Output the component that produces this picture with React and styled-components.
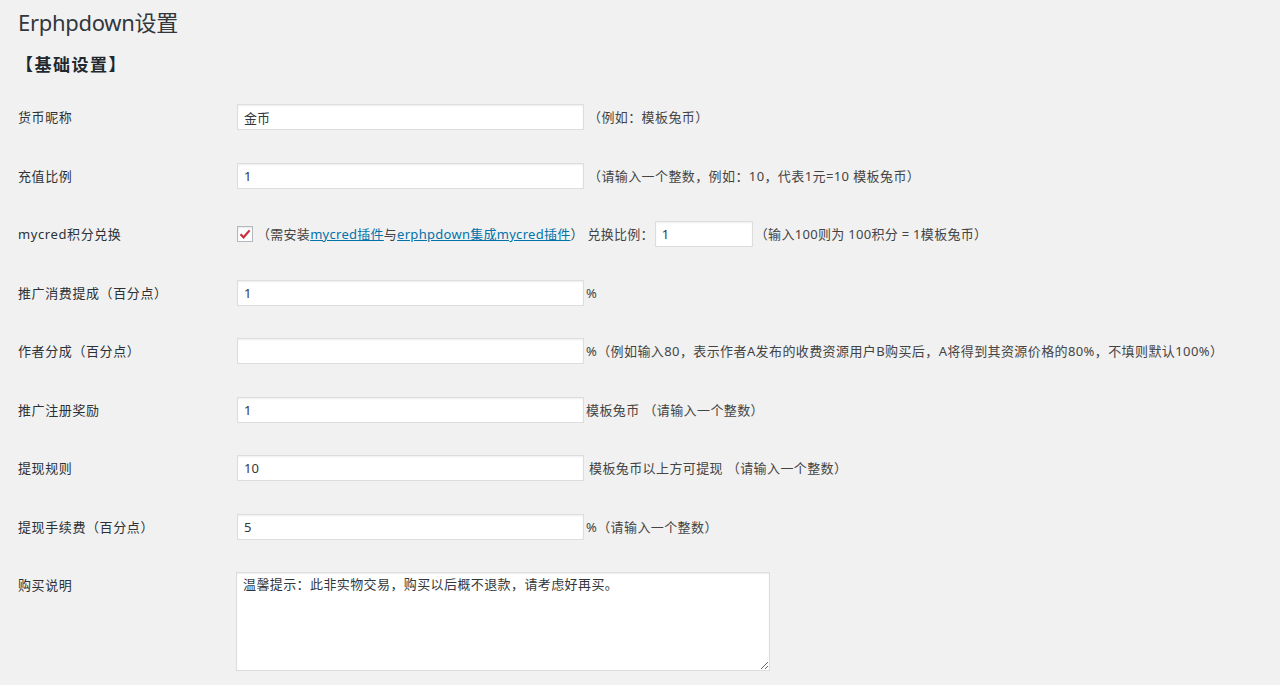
import React from "react";
import styled, { createGlobalStyle } from "styled-components";

const Global = createGlobalStyle`
  html, body { margin: 0; padding: 0; background: #f1f1f1; }
  body {
    font-family: "Noto Sans", "Noto Sans CJK SC", sans-serif;
    font-size: 13px;
    color: #23282d;
  }
  * { box-sizing: border-box; }
`;

const Wrap = styled.div`
  padding: 7px 0 0 18px;
  height: 685px;
  overflow: hidden;
`;

const Title = styled.h1`
  margin: 0;
  font-size: 22px;
  font-weight: 400;
  line-height: 30px;
  letter-spacing: -0.3px;
  color: #32373c;
`;

const Section = styled.h3`
  margin: 15px 0 0 -2px;
  font-size: 17px;
  font-weight: 700;
  line-height: 24px;
  letter-spacing: 1.5px;
  color: #23282d;
  font-family: "Noto Sans CJK SC", sans-serif;
`;

const Form = styled.div`
  margin-top: 12px;
  display: flex;
  flex-direction: column;
`;

const Row = styled.div`
  display: grid;
  grid-template-columns: 218px 1fr;
  height: ${(p) => (p.$tall ? "auto" : "58.5px")};
  align-items: ${(p) => (p.$tall ? "start" : "center")};
`;

const Label = styled.div`
  line-height: 18px;
  color: #2c3136;
  letter-spacing: 0.6px;
  padding-top: ${(p) => (p.$top ? "20px" : "0")};
`;

const Field = styled.div`
  display: flex;
  align-items: center;
  white-space: nowrap;
  padding-top: ${(p) => (p.$top ? "16px" : "0")};
`;

const TextInput = styled.input`
  width: ${(p) => p.$w || "347px"};
  height: 26px;
  margin: 0 0 0 1px;
  padding: 0 6px;
  border: 1px solid #ddd;
  box-shadow: inset 0 1px 2px rgba(0, 0, 0, 0.07);
  background: #fff;
  font-family: "Noto Sans", "Noto Sans CJK SC", sans-serif;
  font-size: 13px;
  color: #32373c;
  outline: none;
`;

const Hint = styled.span`
  margin-left: ${(p) => p.$gap ?? 3}px;
  color: #444;
  line-height: 18px;
  letter-spacing: ${(p) => p.$ls ?? 0.4}px;
`;

const Link = styled.a`
  color: #0073aa;
  text-decoration: underline;
`;

const Check = styled.span`
  width: 16px;
  height: 16px;
  margin-left: 1px;
  border: 1px solid #b4b9be;
  background: #fff;
  box-shadow: inset 0 1px 2px rgba(0, 0, 0, 0.1);
  display: inline-flex;
  align-items: center;
  justify-content: center;
`;

const TextArea = styled.textarea`
  width: 534px;
  height: 99px;
  margin: 0;
  padding: 2px 6px;
  border: 1px solid #ddd;
  box-shadow: inset 0 1px 2px rgba(0, 0, 0, 0.07);
  background: #fff;
  font-family: "Noto Sans", "Noto Sans CJK SC", sans-serif;
  font-size: 13px;
  line-height: 18px;
  letter-spacing: 0.4px;
  color: #32373c;
  outline: none;
`;

export default function App() {
  return (
    <>
      <Global />
      <Wrap>
        <Title>Erphpdown设置</Title>
        <Section>【基础设置】</Section>
        <Form>
          <Row>
            <Label>货币昵称</Label>
            <Field>
              <TextInput defaultValue="金币" />
              <Hint $gap={4}>（例如：模板兔币）</Hint>
            </Field>
          </Row>
          <Row>
            <Label>充值比例</Label>
            <Field>
              <TextInput defaultValue="1" />
              <Hint $gap={4}>（请输入一个整数，例如：10，代表1元=10 模板兔币）</Hint>
            </Field>
          </Row>
          <Row>
            <Label>mycred积分兑换</Label>
            <Field>
              <Check>
                <svg width="12" height="12" viewBox="0 0 12 12">
                  <path d="M1.5 6.2 L4.6 9.3 L10.6 2.4" fill="none" stroke="#c8303c" strokeWidth="2.2" strokeLinejoin="miter" />
                </svg>
              </Check>
              <Hint $gap={4} $ls={0.28}>
                （需安装<Link href="#">mycred插件</Link>与<Link href="#">erphpdown集成mycred插件</Link>） 兑换比例：
              </Hint>
              <TextInput $w="98px" defaultValue="1" />
              <Hint $gap={2} $ls={0.3}>（输入100则为 100积分 = 1模板兔币）</Hint>
            </Field>
          </Row>
          <Row>
            <Label>推广消费提成（百分点）</Label>
            <Field>
              <TextInput defaultValue="1" />
              <Hint $gap={2}>%</Hint>
            </Field>
          </Row>
          <Row>
            <Label>作者分成（百分点）</Label>
            <Field>
              <TextInput defaultValue="" />
              <Hint $gap={2}>%（例如输入80，表示作者A发布的收费资源用户B购买后，A将得到其资源价格的80%，不填则默认100%）</Hint>
            </Field>
          </Row>
          <Row>
            <Label>推广注册奖励</Label>
            <Field>
              <TextInput defaultValue="1" />
              <Hint $gap={2}>模板兔币 （请输入一个整数）</Hint>
            </Field>
          </Row>
          <Row>
            <Label>提现规则</Label>
            <Field>
              <TextInput defaultValue="10" />
              <Hint $gap={5}>模板兔币以上方可提现 （请输入一个整数）</Hint>
            </Field>
          </Row>
          <Row>
            <Label>提现手续费（百分点）</Label>
            <Field>
              <TextInput defaultValue="5" />
              <Hint $gap={2}>%（请输入一个整数）</Hint>
            </Field>
          </Row>
          <Row $tall>
            <Label $top>购买说明</Label>
            <Field $top>
              <TextArea defaultValue="温馨提示：此非实物交易，购买以后概不退款，请考虑好再买。" />
            </Field>
          </Row>
        </Form>
      </Wrap>
    </>
  );
}
